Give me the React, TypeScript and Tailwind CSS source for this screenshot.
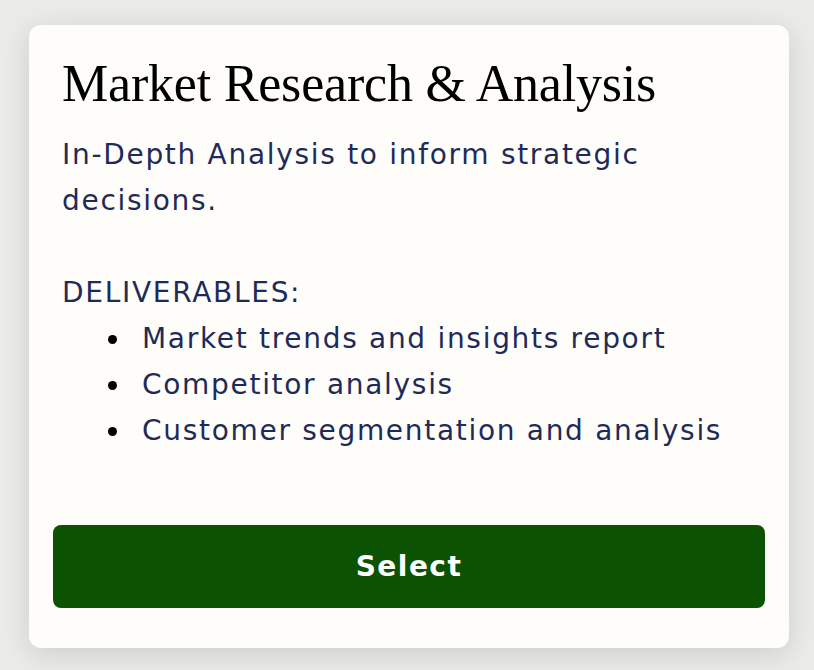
export default function App() {
  return (
    <div className="w-[814px] h-[670px] bg-[#ebebea] pt-[25px] pl-[29px] overflow-hidden">
      <div className="w-[760px] h-[623px] bg-[#fefdf9] rounded-[12px] shadow-[0_6px_30px_rgba(0,0,0,0.13)] px-[24px] pt-[29px] pb-[40px] flex flex-col">
        <div className="px-[9px]">
          <h1
            className="text-[52px] leading-[60px] text-black tracking-[-0.2px]"
            style={{ fontFamily: '"Liberation Serif", serif' }}
          >
            Market Research &amp; Analysis
          </h1>
          <div
            className="mt-[18px] text-[28px] leading-[46px] text-[#1e2b5a] tracking-[1.7px]"
            style={{ fontFamily: '"DejaVu Sans", sans-serif' }}
          >
            <p>In-Depth Analysis to inform strategic</p>
            <p>decisions.</p>
            <p className="h-[46px]"></p>
            <p>DELIVERABLES:</p>
            <ul className="pl-[44px]">
              {[
                "Market trends and insights report",
                "Competitor analysis",
                "Customer segmentation and analysis",
              ].map((t) => (
                <li key={t} className="flex items-center">
                  <span className="w-[36px] flex items-center">
                    <span className="w-[9px] h-[9px] rounded-full bg-black ml-[2px]"></span>
                  </span>
                  <span>{t}</span>
                </li>
              ))}
            </ul>
          </div>
        </div>
        <div className="flex-1"></div>
        <button
          className="h-[83px] w-full rounded-[8px] bg-[#0b5203] text-white text-[28px] font-bold tracking-[1.5px]"
          style={{ fontFamily: '"DejaVu Sans", sans-serif' }}
        >
          Select
        </button>
      </div>
    </div>
  );
}
